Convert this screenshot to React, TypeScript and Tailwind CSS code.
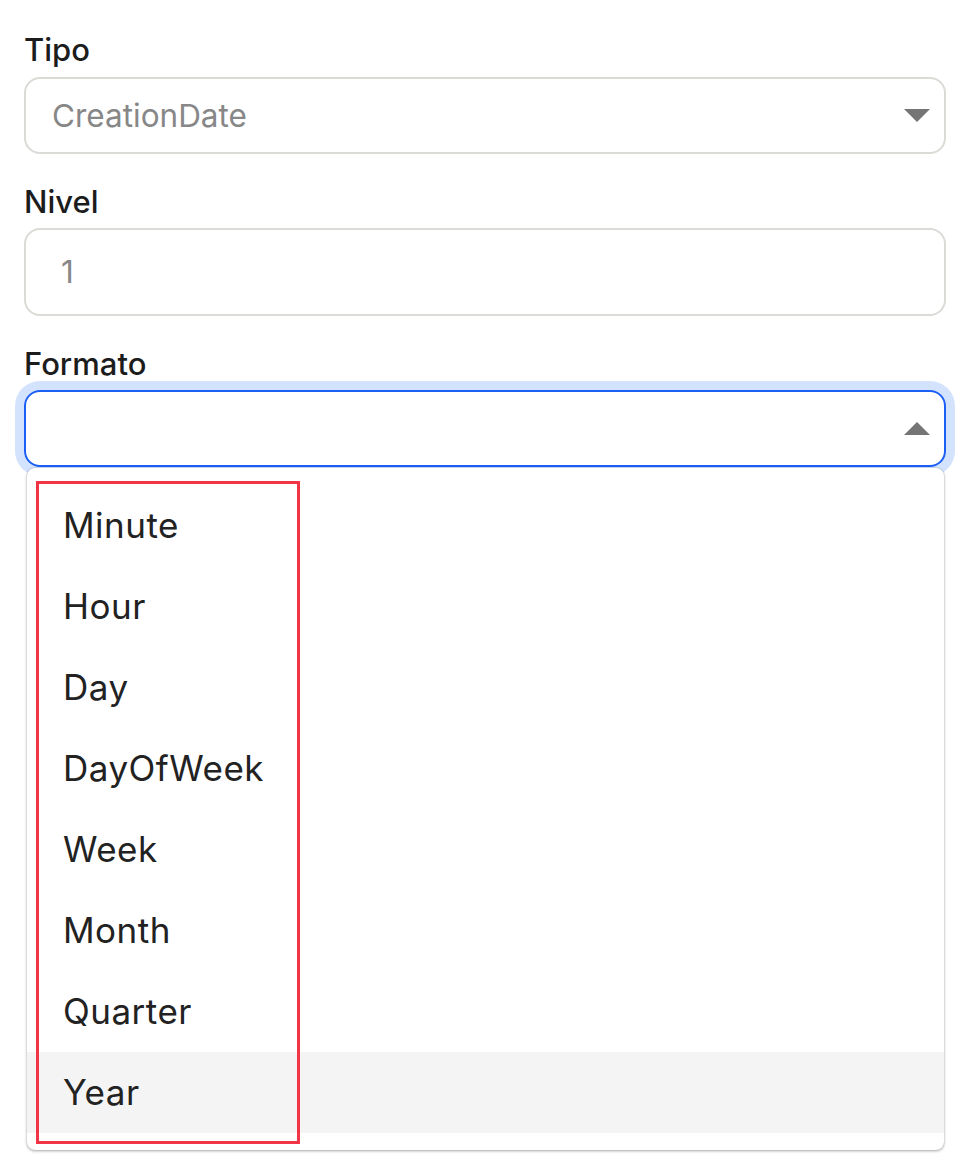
import React from "react";

const items = ["Minute", "Hour", "Day", "DayOfWeek", "Week", "Month", "Quarter", "Year"];

function Caret({ up }: { up?: boolean }) {
  return (
    <svg width="26" height="13" viewBox="0 0 26 13" className="shrink-0">
      {up ? <path d="M0 13 L13 0 L26 13 Z" fill="#757575" /> : <path d="M0 0 L26 0 L13 13 Z" fill="#757575" />}
    </svg>
  );
}

export default function App() {
  return (
    <div
      className="w-[978px] h-[1176px] bg-white px-[24px] pt-[32px] overflow-hidden"
      style={{ fontFamily: "Inter, 'Noto Sans', sans-serif" }}
    >
      <label className="block text-[31px] leading-[36px] font-medium text-[#1c1c1c] h-[45px]">Tipo</label>
      <div className="flex h-[77px] w-[922px] items-center justify-between rounded-[16px] border-2 border-[#dcdad6] pl-[26px] pr-[14px]">
        <span className="text-[31.5px] text-[#878787]">CreationDate</span>
        <Caret />
      </div>

      <label className="mt-[30px] block text-[31px] leading-[36px] font-medium text-[#1c1c1c] h-[44px]">Nivel</label>
      <div className="flex h-[88px] w-[922px] items-center rounded-[16px] border-2 border-[#dcdad6] pl-[35px]">
        <span className="text-[31.5px] text-[#878787]">1</span>
      </div>

      <label className="mt-[30px] block text-[31px] leading-[36px] font-medium text-[#1c1c1c] h-[44px]">Formato</label>
      <div className="flex h-[77px] w-[922px] items-center justify-end rounded-[16px] border-2 border-[#1b5ff5] pr-[14px] shadow-[0_0_0_9px_#d3e2fd]">
        <Caret up />
      </div>

      <div className="relative ml-[3px] mt-[1px] w-[917px] rounded-[8px] bg-white pt-[17px] pb-[17px] shadow-[0_1px_3px_rgba(0,0,0,0.35),0_0_1px_rgba(0,0,0,0.2)]">
        {items.map((it) => (
          <div
            key={it}
            className={`flex h-[81px] items-center pl-[36px] text-[35px] tracking-[0.5px] text-[#222222] ${it === "Year" ? "bg-[#f4f4f4]" : ""}`}
          >
            {it}
          </div>
        ))}
        <div className="pointer-events-none absolute left-[9px] top-[13px] h-[663px] w-[264px] border-[3px] border-[#f23546]" />
      </div>
    </div>
  );
}
